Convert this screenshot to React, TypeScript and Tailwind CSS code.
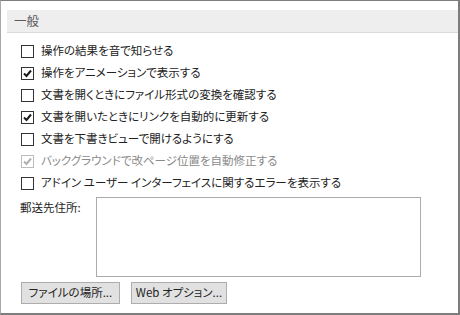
import React from "react";

const rows: { label: string; checked: boolean; disabled?: boolean }[] = [
  { label: "操作の結果を音で知らせる", checked: false },
  { label: "操作をアニメーションで表示する", checked: true },
  { label: "文書を開くときにファイル形式の変換を確認する", checked: false },
  { label: "文書を開いたときにリンクを自動的に更新する", checked: true },
  { label: "文書を下書きビューで開けるようにする", checked: false },
  { label: "バックグラウンドで改ページ位置を自動修正する", checked: true, disabled: true },
  { label: "アドイン ユーザー インターフェイスに関するエラーを表示する", checked: false },
];

function Box({ checked, disabled }: { checked: boolean; disabled?: boolean }) {
  return (
    <div
      className={
        "w-[13px] h-[13px] border flex items-center justify-center shrink-0 bg-white " +
        (disabled ? "border-[#bcbcbc]" : "border-[#333333]")
      }
    >
      {checked && (
        <svg width="11" height="11" viewBox="0 0 11 11">
          <path
            d="M2 5.5 L4.5 8 L9 2.5"
            fill="none"
            stroke={disabled ? "#b0b0b0" : "#1a1a1a"}
            strokeWidth="2"
          />
        </svg>
      )}
    </div>
  );
}

export default function App() {
  return (
    <div
      className="w-[460px] h-[315px] bg-white border-t border-l border-r-2 border-b-2 border-t-[#7d7d7d] border-l-[#a8a8a8] border-r-[#7d7d7d] border-b-[#7d7d7d] text-[11.5px] text-[#222222] [font-feature-settings:'palt'] flex flex-col"
      style={{ fontFamily: '"Noto Sans CJK JP", "Noto Sans", sans-serif' }}
    >
      <div className="mt-[9px] ml-[6px] h-[23px] bg-[#eeeeee] border-b border-[#dcdcdc] flex items-center pl-[7px] text-[12.5px] text-[#5a5a5a]">
        一般
      </div>
      <div className="pt-[7px] pl-[20px] flex flex-col">
        {rows.map((r) => (
          <div key={r.label} className="h-[22px] flex items-center gap-[7px]">
            <Box checked={r.checked} disabled={r.disabled} />
            <span className={r.disabled ? "text-[#8a8a8a]" : ""}>{r.label}</span>
          </div>
        ))}
      </div>
      <div className="pl-[19px] mt-[3px] flex items-start">
        <div className="w-[76px] pt-[2px]">郵送先住所:</div>
        <div className="w-[325px] h-[80px] border border-[#ababab]"></div>
      </div>
      <div className="pl-[20px] mt-[5px] flex gap-[11px]">
        <div className="w-[99px] h-[22px] bg-[#e1e1e1] border border-[#adadad] flex items-center justify-center">
          ファイルの場所...
        </div>
        <div className="w-[96px] h-[22px] bg-[#e1e1e1] border border-[#adadad] flex items-center justify-center">
          Web オプション...
        </div>
      </div>
    </div>
  );
}
